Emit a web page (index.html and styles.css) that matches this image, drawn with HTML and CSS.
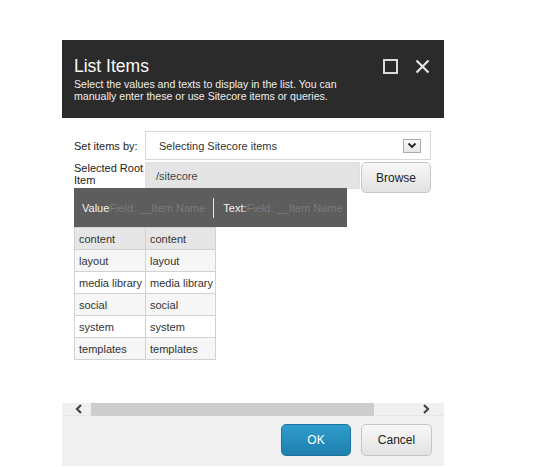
FILE: index.html
```html
<!DOCTYPE html>
<html>
<head>
<meta charset="utf-8">
<link rel="stylesheet" href="styles.css">
</head>
<body>
<div class="dialog">
  <div class="header">
    <div class="head-top">
      <div class="title">List Items</div>
      <div class="head-icons">
        <svg width="15" height="15" viewBox="0 0 15 15"><rect x="1" y="1" width="13" height="13" fill="none" stroke="#dcdcdc" stroke-width="2"/></svg>
        <svg width="15" height="15" viewBox="0 0 15 15"><path d="M1.5 1.5 L13.5 13.5 M13.5 1.5 L1.5 13.5" stroke="#e6e6e6" stroke-width="2.2"/></svg>
      </div>
    </div>
    <div class="desc">Select the values and texts to display in the list. You can manually enter these or use Sitecore items or queries.</div>
  </div>
  <div class="body">
    <div class="row">
      <div class="label">Set items by:</div>
      <div class="select">
        <span>Selecting Sitecore items</span>
        <span class="arrow"><svg width="10" height="7" viewBox="0 0 10 7"><path d="M1.5 1.5 L5 5 L8.5 1.5" fill="none" stroke="#222" stroke-width="1.8"/></svg></span>
      </div>
    </div>
    <div class="row row2">
      <div class="label label2">Selected Root Item</div>
      <div class="input">/sitecore</div>
      <div class="btn browse">Browse</div>
    </div>
    <div class="bar">
      <span class="bar-key">Value</span><span class="bar-ph">Field: __Item Name</span>
      <span class="sep"></span>
      <span class="bar-key">Text:</span><span class="bar-ph">Field: __Item Name</span>
    </div>
    <table class="grid">
      <tr class="r0"><td>content</td><td>content</td></tr>
      <tr class="r1"><td>layout</td><td>layout</td></tr>
      <tr class="r2"><td>media library</td><td>media library</td></tr>
      <tr class="r1"><td>social</td><td>social</td></tr>
      <tr class="r2"><td>system</td><td>system</td></tr>
      <tr class="r1"><td>templates</td><td>templates</td></tr>
    </table>
  </div>
  <div class="scroll">
    <svg class="sarrow" width="8" height="10" viewBox="0 0 8 10"><path d="M6 1 L2 5 L6 9" fill="none" stroke="#444" stroke-width="2.2"/></svg>
    <div class="thumb"></div>
    <svg class="sarrow" width="8" height="10" viewBox="0 0 8 10"><path d="M2 1 L6 5 L2 9" fill="none" stroke="#444" stroke-width="2.2"/></svg>
  </div>
  <div class="footer">
    <div class="btn ok">OK</div>
    <div class="btn cancel">Cancel</div>
  </div>
</div>
</body>
</html>
```
FILE: styles.css
```css
* { box-sizing: border-box; }
html, body { margin: 0; padding: 0; background: #fff; }
body { font-family: "Liberation Sans", Arial, sans-serif; }
.dialog {
  margin: 40px 0 0 62px;
  width: 382px;
  display: flex;
  flex-direction: column;
}
.header {
  background: #2b2b2b;
  height: 78px;
  padding: 15px 13px 0 12px;
  color: #fff;
}
.head-top { display: flex; justify-content: space-between; align-items: center; height: 22px; }
.title { font-size: 17.5px; color: #fafafa; }
.head-icons { display: flex; gap: 17px; padding-right: 1px; margin-top: 1px; }
.head-icons svg { display: block; }
.desc { font-size: 10.6px; line-height: 12px; color: #eee; margin-top: 1px; width: 300px; }
.body {
  background: #fff;
  height: 285px;
  padding: 13px 13px 0 12px;
  display: flex;
  flex-direction: column;
  align-items: flex-start;
}
.row { display: flex; align-items: flex-start; }
.label { width: 71px; font-size: 11px; color: #222; line-height: 12px; padding-top: 9px; }
.select {
  width: 286px; height: 29px;
  border: 1px solid #d8d8d8;
  display: flex; align-items: center; justify-content: space-between;
  padding: 0 9px 0 13px;
  font-size: 11px; color: #333;
}
.arrow {
  width: 18px; height: 14px;
  border: 1px solid #aaa;
  background: linear-gradient(#fafafa, #e6e6e6);
  display: flex; align-items: center; justify-content: center;
}
.arrow svg { display: block; }
.row2 { margin-top: 2px; }
.label2 { padding-top: 0; width: 71px; }
.input {
  width: 215px; height: 27px;
  background: #e4e4e4;
  border: 1px solid #e0e0e0;
  font-size: 11px; color: #444;
  padding: 7px 0 0 10px;
}
.btn {
  display: flex; align-items: center; justify-content: center;
  border-radius: 5px;
  font-size: 12px;
}
.browse {
  margin-left: 1px;
  width: 70px; height: 31px;
  border: 1px solid #c6c6c6;
  background: linear-gradient(#f7f7f7, #e2e2e2);
  color: #222;
}
.bar {
  margin-top: -5px;
  width: 273px; height: 39px;
  background: #5d5d5d;
  display: flex; align-items: center;
  padding-left: 8px;
  font-size: 11px;
}
.bar-key { color: #f2f2f2; }
.bar-ph { color: #7b7b7b; }
.sep { width: 1px; height: 20px; background: #e8e8e8; margin: 0 9px 0 8px; }
.grid {
  border-collapse: collapse;
  font-size: 11px;
  color: #333;
  table-layout: fixed;
  width: 141px;
}
.grid td {
  border: 1px solid #d2d2d2;
  height: 22px;
  padding: 0 0 0 4px;
  white-space: nowrap;
}
.grid td:first-child { width: 71px; }
.grid td:last-child { width: 70px; }
.r0 td { background: #e6e6e6; }
.r1 td { background: #f6f6f6; }
.r2 td { background: #fff; }
.scroll {
  height: 13px;
  background: #f0f0f0;
  display: flex; align-items: center;
  padding: 0 14px 0 13px;
  border-bottom: 1px solid #e6e6e6;
}
.sarrow { display: block; }
.thumb { width: 283px; height: 13px; background: #cdcdcd; margin: 0 48px 0 8px; }
.footer {
  background: #f0f0f0;
  height: 50px;
  display: flex; justify-content: flex-end; align-items: flex-start;
  padding: 8px 12px 0 0;
  gap: 10px;
}
.ok {
  width: 70px; height: 32px;
  background: linear-gradient(#2f9dcc, #1e7fae);
  border: 1px solid #1d72a0;
  color: #fff;
}
.cancel {
  width: 71px; height: 32px;
  background: linear-gradient(#f8f8f8, #e2e2e2);
  border: 1px solid #c6c6c6;
  color: #222;
}
```
